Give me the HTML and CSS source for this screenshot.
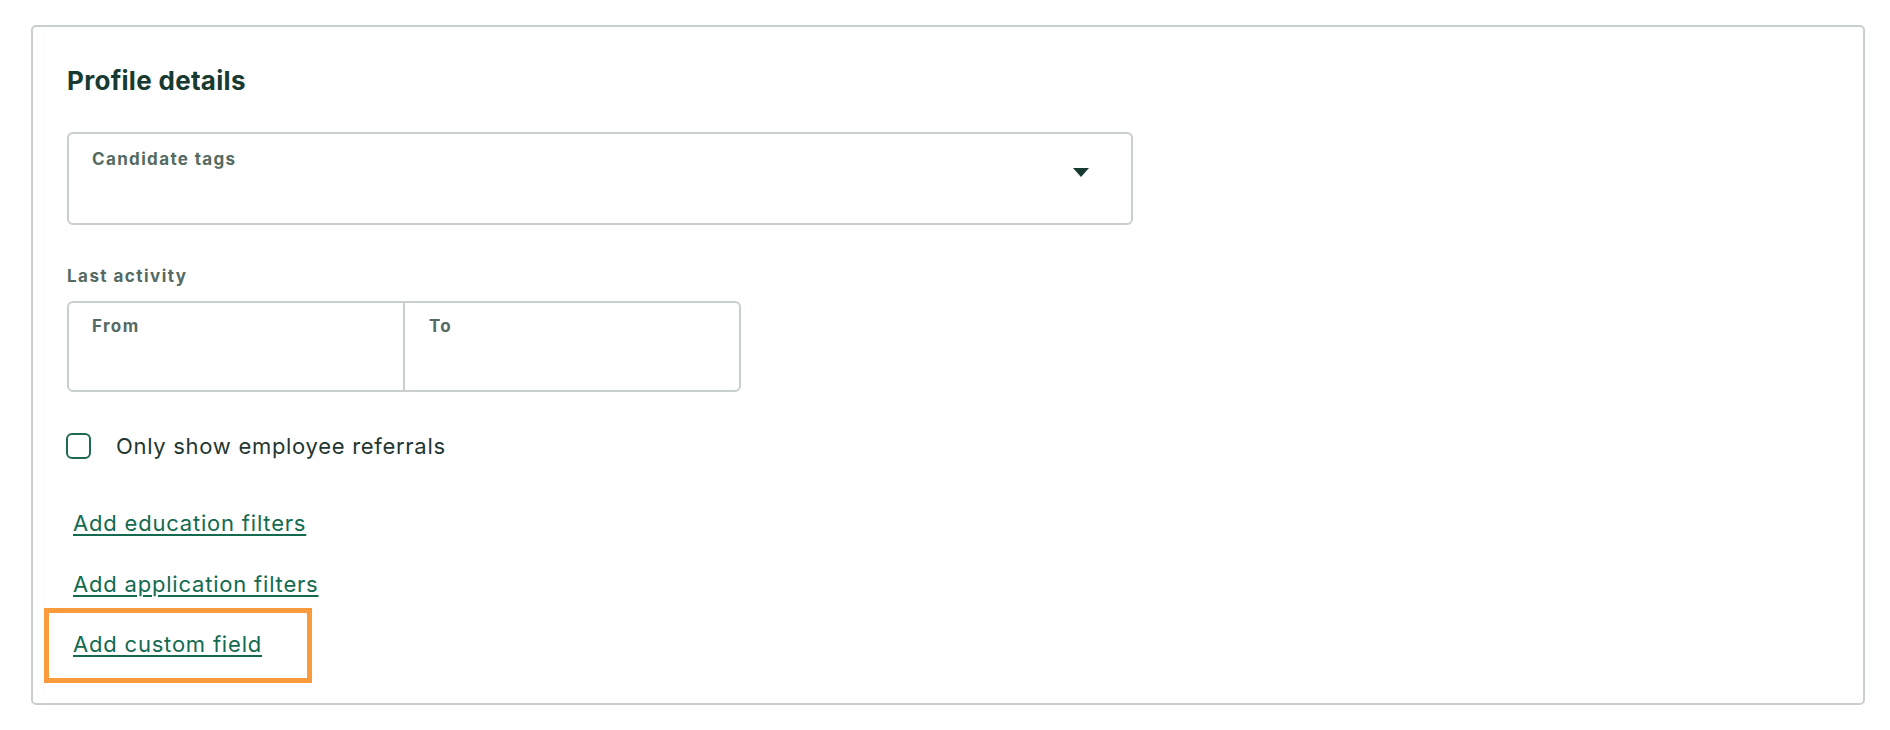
FILE: index.html
```html
<!DOCTYPE html>
<html lang="en">
<head>
<meta charset="utf-8">
<title>Profile details</title>
<link rel="stylesheet" href="styles.css">
</head>
<body>
<div class="page">
  <section class="card">
    <h2 class="card-title">Profile details</h2>

    <div class="select-box">
      <span class="field-label">Candidate tags</span>
      <span class="caret" aria-hidden="true">
        <svg width="16" height="9" viewBox="0 0 16 9"><path d="M0 0H16L8 9Z" fill="#173a31"/></svg>
      </span>
    </div>

    <div class="group-label">Last activity</div>
    <div class="date-range">
      <div class="date-cell"><span class="field-label">From</span></div>
      <div class="date-cell date-cell-right"><span class="field-label">To</span></div>
    </div>

    <label class="check-row">
      <span class="checkbox"></span>
      <span class="check-text">Only show employee referrals</span>
    </label>

    <div class="links">
      <a class="link link-first" href="#">Add education filters</a>
      <a class="link link-second" href="#">Add application filters</a>
      <div class="highlight">
        <a class="link" href="#">Add custom field</a>
      </div>
    </div>
  </section>
</div>
</body>
</html>
```
FILE: styles.css
```css
* { box-sizing: border-box; }
html, body { margin: 0; padding: 0; background: #ffffff; }
body {
  font-family: Inter, "Liberation Sans", Arial, sans-serif;
  color: #1a3a32;
}
.page {
  padding: 25px 25px 25px 31px;
}
.card {
  border: 2px solid #c8cfcc;
  border-radius: 5px;
  padding: 39px 36px 19px 34px;
  height: 680px;
}
.card-title {
  margin: 0 0 36px 0;
  font-size: 26px;
  line-height: 30px;
  font-weight: 700;
  color: #173a31;
  letter-spacing: 0.3px;
}
.field-label {
  font-size: 17px;
  line-height: 20px;
  font-weight: 700;
  color: #546a62;
  letter-spacing: 1.35px;
}
.select-box {
  width: 1066px;
  height: 93px;
  border: 2px solid #c8cfcc;
  border-radius: 6px;
  padding: 15px 42px 0 23px;
  display: flex;
  justify-content: space-between;
  align-items: flex-start;
}
.caret {
  display: block;
  margin-top: 19px;
  line-height: 0;
}
.group-label {
  margin-top: 41px;
  font-size: 17px;
  line-height: 20px;
  font-weight: 700;
  color: #546a62;
  letter-spacing: 1.45px;
}
.date-range {
  margin-top: 15px;
  width: 674px;
  height: 91px;
  border: 2px solid #c8cfcc;
  border-radius: 6px;
  display: grid;
  grid-template-columns: 334px 1fr;
}
.date-cell {
  padding: 13px 0 0 23px;
}
.date-cell-right {
  border-left: 2px solid #c8cfcc;
  padding-left: 24px;
}
.check-row {
  margin-top: 41px;
  display: flex;
  align-items: center;
  gap: 25px;
  height: 26px;
}
.checkbox {
  width: 25px;
  height: 26px;
  border: 2px solid #1f6a53;
  border-radius: 6px;
  margin-left: -1px;
  flex: none;
}
.check-text {
  font-size: 22px;
  line-height: 24px;
  color: #1f3730;
  letter-spacing: 0.7px;
}
.links {
  display: flex;
  flex-direction: column;
  align-items: flex-start;
  margin-top: 52px;
  padding-left: 6px;
}
.link {
  font-size: 22px;
  line-height: 24px;
  color: #136a4f;
  letter-spacing: 0.8px;
  text-decoration: underline;
  text-underline-offset: 3px;
  text-decoration-thickness: 1.5px;
}
.link-second {
  margin-top: 37px;
}
.highlight {
  margin-top: 12px;
  margin-left: -29px;
  width: 268px;
  border: 5px solid #f99a3d;
  padding: 19px 0 22px 24px;
}
```
